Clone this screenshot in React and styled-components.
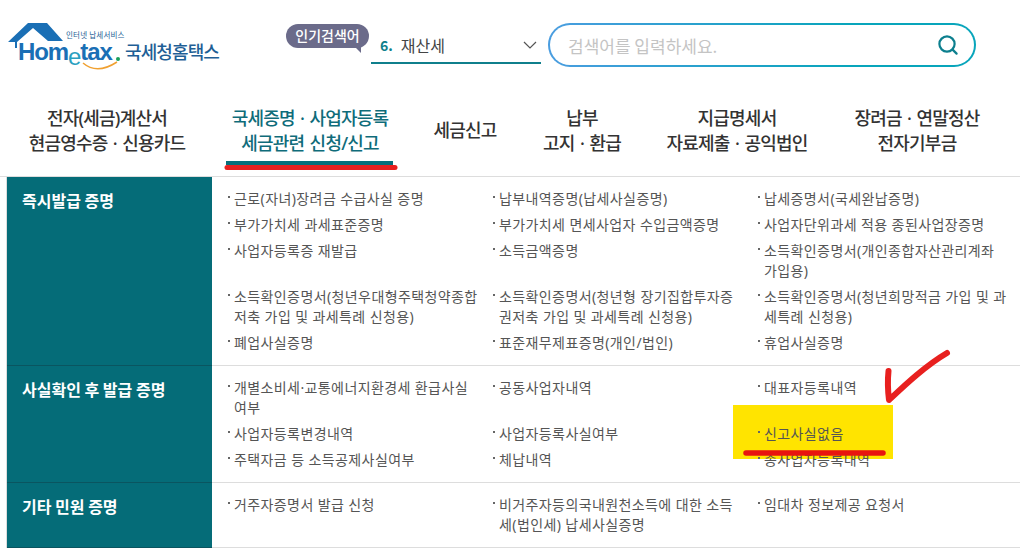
import React from "react";
import styled, { createGlobalStyle } from "styled-components";

const FONT = `"Noto Sans CJK KR", "Noto Sans", sans-serif`;
const TEXT_FONT = `"Noto Sans", "Noto Sans CJK KR", sans-serif`;

const GlobalStyle = createGlobalStyle`
  html, body { margin: 0; padding: 0; background: #fff; }
  body { width: 1020px; height: 548px; overflow: hidden; font-family: ${FONT}; }
  * { box-sizing: border-box; }
`;

const NAV = [
  { lines: ["전자(세금)계산서", "현금영수증 · 신용카드"], w: 214 },
  { lines: ["국세증명 · 사업자등록", "세금관련 신청/신고"], w: 192, active: true },
  { lines: ["세금신고"], w: 118 },
  { lines: ["납부", "고지 · 환급"], w: 116 },
  { lines: ["지급명세서", "자료제출 · 공익법인"], w: 194 },
  { lines: ["장려금 · 연말정산", "전자기부금"], w: 166 },
];

const GROUPS = [
  {
    title: "즉시발급 증명",
    rows: [
      ["근로(자녀)장려금 수급사실 증명", "납부내역증명(납세사실증명)", "납세증명서(국세완납증명)"],
      ["부가가치세 과세표준증명", "부가가치세 면세사업자 수입금액증명", "사업자단위과세 적용 종된사업장증명"],
      ["사업자등록증 재발급", "소득금액증명", "소득확인증명서(개인종합자산관리계좌 가입용)"],
      ["소득확인증명서(청년우대형주택청약종합저축 가입 및 과세특례 신청용)", "소득확인증명서(청년형 장기집합투자증권저축 가입 및 과세특례 신청용)", "소득확인증명서(청년희망적금 가입 및 과세특례 신청용)"],
      ["폐업사실증명", "표준재무제표증명(개인/법인)", "휴업사실증명"],
    ],
  },
  {
    title: "사실확인 후 발급 증명",
    rows: [
      ["개별소비세·교통에너지환경세 환급사실여부", "공동사업자내역", "대표자등록내역"],
      ["사업자등록변경내역", "사업자등록사실여부", "신고사실없음"],
      ["주택자금 등 소득공제사실여부", "체납내역", "종사업자등록내역"],
    ],
  },
  {
    title: "기타 민원 증명",
    rows: [
      ["거주자증명서 발급 신청", "비거주자등의국내원천소득에 대한 소득세(법인세) 납세사실증명", "임대차 정보제공 요청서"],
    ],
  },
];

export default function App() {
  return (
    <Page>
      <GlobalStyle />
      <Header>
        <LogoWrap>
          <LogoMark />
          <LogoName>국세청홈택스</LogoName>
        </LogoWrap>
        <Popular>
          <Bubble>인기검색어</Bubble>
          <Rank>
            <RankNo>6.</RankNo>
            <RankText>재산세</RankText>
            <svg width="14" height="8" viewBox="0 0 14 8" fill="none">
              <path d="M1 1l6 6 6-6" stroke="#555" strokeWidth="1.2" />
            </svg>
          </Rank>
        </Popular>
        <Search>
          <SearchText>검색어를 입력하세요.</SearchText>
          <svg width="22" height="22" viewBox="0 0 22 22" fill="none">
            <circle cx="10" cy="10" r="7.6" stroke="#0c7f8e" strokeWidth="2.2" />
            <path d="M15.6 15.6l4 4" stroke="#0c7f8e" strokeWidth="2.2" strokeLinecap="round" />
          </svg>
        </Search>
      </Header>
      <Nav>
        {NAV.map((n) => (
          <NavItem key={n.lines[0]} $w={n.w} $active={n.active} $single={n.lines.length === 1}>
            {n.lines.map((l) => (
              <span key={l}>{l}</span>
            ))}
            {n.active && <NavBar />}
          </NavItem>
        ))}
      </Nav>
      <Table>
        {GROUPS.map((g) => (
          <Group key={g.title}>
            <GroupTitle>{g.title}</GroupTitle>
            <Rows>
              {g.rows.flat().map((t) => (
                <Cell key={t} $hl={t === "신고사실없음"}>{t}</Cell>
              ))}
            </Rows>
          </Group>
        ))}
      </Table>
      <Marker>
        <svg width="1020" height="548" viewBox="0 0 1020 548" fill="none">
          <path d="M746 453H883" stroke="#e8140f" strokeWidth="5.5" strokeLinecap="round" />
          <path d="M888.500 371C887.500 381 888 392 889 400C905 385 925 366 947 353" stroke="#e8201f" strokeWidth="6" strokeLinecap="round" strokeLinejoin="round" />
          <path d="M227 167.500H395" stroke="#e8201f" strokeWidth="5" strokeLinecap="round" />
        </svg>
      </Marker>
    </Page>
  );
}

function LogoMark() {
  return (
    <LogoBox>
      <LogoArt width="122" height="52" viewBox="0 0 122 52" fill="none">
        <path d="M0 20L20 1H39L55 19H40L25 6L9 20V26H7V20Z" fill="#1a6fb5" />
        <path d="M75 41Q89 53 109 40" stroke="#f0a030" strokeWidth="1.5" />
        <circle cx="110" cy="37" r="2" fill="#1aa05a" />
      </LogoArt>
      <LogoSub>인터넷 납세서비스</LogoSub>
      <LogoWord>Hom<LogoE>e</LogoE>tax</LogoWord>
    </LogoBox>
  );
}

const Page = styled.div`
  position: relative;
  width: 1020px;
  height: 548px;
  overflow: hidden;
  background: #fff;
`;
const Header = styled.div`
  display: flex;
  align-items: flex-start;
  height: 97px;
  padding: 22px 0 0 9px;
`;
const LogoWrap = styled.div`
  display: flex;
  align-items: flex-start;
  width: 277px;
`;
const LogoBox = styled.div`
  position: relative;
  width: 117px;
  height: 52px;
`;
const LogoArt = styled.svg`
  position: absolute;
  left: -1px;
  top: 0;
`;
const LogoSub = styled.div`
  position: absolute;
  left: 57px;
  top: 8px;
  font-size: 7.5px;
  line-height: 9px;
  letter-spacing: 0.2px;
  color: #1f5f96;
  white-space: nowrap;
`;
const LogoWord = styled.div`
  position: absolute;
  left: 9px;
  top: 19px;
  font-family: "Liberation Sans", sans-serif;
  font-weight: 700;
  font-size: 24px;
  line-height: 21px;
  letter-spacing: -1.1px;
  color: #1a6fb5;
  white-space: nowrap;
`;
const LogoE = styled.span`
  position: relative;
  top: 5px;
  font-weight: 400;
  color: #2a9fc0;
`;
const LogoName = styled.div`
  margin-top: 16px;
  margin-left: -1px;
  font-size: 18px;
  line-height: 26px;
  font-weight: 500;
  letter-spacing: -0.9px;
  color: #1f5f96;
  white-space: nowrap;
`;
const Popular = styled.div`
  display: flex;
  align-items: flex-start;
  gap: 2px;
`;
const Bubble = styled.div`
  position: relative;
  height: 24px;
  width: 83px;
  flex: none;
  margin-top: 2px;
  border-radius: 12px;
  background: #6b6b8a;
  color: #fff;
  font-size: 14px;
  line-height: 22px;
  font-weight: 500;
  text-align: center;
  &::after {
    content: "";
    position: absolute;
    right: 8px;
    bottom: -5px;
    border-top: 6px solid #6b6b8a;
    border-left: 6px solid transparent;
  }
`;
const Rank = styled.div`
  display: flex;
  align-items: center;
  width: 170px;
  height: 42px;
  padding: 5px 4px 0 9px;
  border-bottom: 2px solid #0f7f8c;
`;
const RankNo = styled.span`
  color: #0f7f8c;
  font-size: 14px;
  font-weight: 700;
  margin-right: 8px;
`;
const RankText = styled.span`
  flex: 1;
  font-size: 16px;
  color: #444;
`;
const Search = styled.div`
  display: flex;
  align-items: center;
  justify-content: space-between;
  width: 428px;
  height: 44px;
  margin-top: 1px;
  margin-left: 7px;
  padding: 0 15px 0 18px;
  border: 2px solid transparent;
  border-radius: 22px;
  background:
    linear-gradient(#fff, #fff) padding-box,
    linear-gradient(90deg, #4a9de0, #08a5bb 70%) border-box;
`;
const SearchText = styled.span`
  font-size: 17px;
  color: #c4c4c4;
`;
const Nav = styled.div`
  display: flex;
  height: 80px;
  border-bottom: 1px solid #ddd;
`;
const NavItem = styled.div`
  position: relative;
  width: ${(p) => p.$w}px;
  display: flex;
  flex-direction: column;
  align-items: center;
  padding-top: ${(p) => (p.$single ? "21px" : "9px")};
  font-family: ${TEXT_FONT};
  font-size: 18px;
  font-weight: 500;
  line-height: 25px;
  letter-spacing: -0.8px;
  word-spacing: 1.5px;
  white-space: nowrap;
  color: ${(p) => (p.$active ? "#0f6c7a" : "#333")};
`;
const NavBar = styled.div`
  position: absolute;
  left: 12px;
  right: 13px;
  bottom: 11px;
  height: 4px;
  background: #076f7b;
`;
const Table = styled.div`
  display: flex;
  flex-direction: column;
  margin-left: 6px;
  border-left: 1px solid #ddd;
`;
const Group = styled.div`
  display: flex;
`;
const GroupTitle = styled.div`
  width: 205px;
  flex: none;
  padding: 11px 0 0 15px;
  background: #056c78;
  border-bottom: 1px solid #0a5560;
  color: #fff;
  font-size: 16px;
  line-height: 24px;
  font-weight: 700;
`;
const Rows = styled.div`
  flex: 1;
  display: grid;
  grid-template-columns: 265px 265px 1fr;
  align-content: start;
  padding: 12px 0 12px 16px;
  row-gap: 6px;
  border-bottom: 1px solid #ddd;
`;
const Cell = styled.div`
  position: relative;
  width: 251px;
  padding-left: 6px;
  font-family: ${TEXT_FONT};
  font-size: 14px;
  line-height: 20px;
  letter-spacing: 0.4px;
  color: #555;
  &::before {
    content: "";
    position: absolute;
    left: 0;
    top: 7px;
    width: 2px;
    height: 2px;
    background: #666;
  }
  ${(p) =>
    p.$hl &&
    `
    z-index: 0;
    &::after {
      content: "";
      position: absolute;
      left: -25px;
      top: -19px;
      width: 160px;
      height: 54px;
      background: #ffe400;
      z-index: -1;
    }
  `}
`;
const Marker = styled.div`
  position: absolute;
  inset: 0;
  pointer-events: none;
`;
